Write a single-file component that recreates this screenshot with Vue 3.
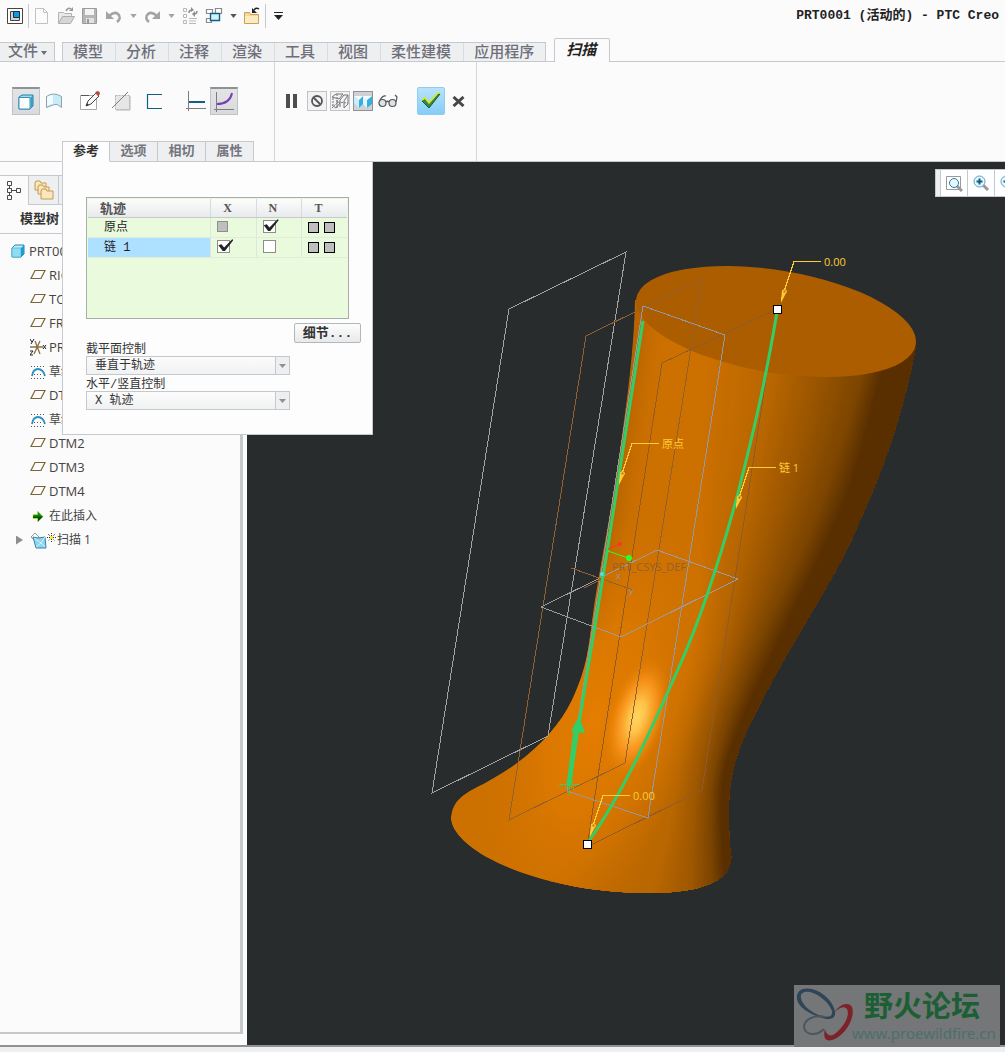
<template>
  <div class="app">
    <!-- Quick access bar -->
    <header class="titlebar">
      <div class="quick">
        <template v-for="(q, i) in QUICK" :key="i">
          <span v-if="q.sep" class="quick-sep" />
          <button v-else-if="q.drop" class="drop" :class="{ dark: q.dark }" :aria-label="q.label">
            <svg width="7" height="4" viewBox="0 0 8 5"><path d="M0 0h8L4 5z" /></svg>
          </button>
          <button v-else class="quick-btn" :aria-label="q.label">
            <svg width="20" height="20" viewBox="0 0 20 20" fill="none" v-html="q.art" />
          </button>
        </template>
      </div>
      <h1 class="title">PRT0001 (活动的) - PTC Creo</h1>
    </header>

    <!-- Ribbon tabs -->
    <nav class="tabs">
      <button class="file-tab">
        文件<svg width="6" height="4" viewBox="0 0 6 4"><path d="M0 0h6L3 4z" fill="#6d6e78" /></svg>
      </button>
      <div class="tab-strip">
        <button v-for="t in TABS" :key="t" class="tab">{{ t }}</button>
      </div>
      <button class="tab-active">扫描</button>
    </nav>

    <!-- Ribbon -->
    <section class="ribbon">
      <div class="group group-tools">
        <div class="tools">
          <button
            v-for="t in TOOLS"
            :key="t.label"
            class="tool"
            :class="[t.cls, { pressed: t.on }]"
            :aria-label="t.label"
          >
            <svg width="22" height="22" viewBox="0 0 22 22" fill="none" v-html="t.art" />
          </button>
        </div>
        <div class="subtabs">
          <button
            v-for="s in SUBTABS"
            :key="s"
            class="subtab"
            :class="{ on: s === subtab }"
            @click="subtab = s"
          >{{ s }}</button>
        </div>
      </div>

      <div class="group group-run">
        <div class="tools run">
          <button class="mini plain" aria-label="暂停">
            <svg width="12" height="14" viewBox="0 0 12 14"><path d="M0 0h4v14H0zM7 0h4v14H7z" fill="#4d4d4d" /></svg>
          </button>
          <button class="mini boxed" aria-label="无预览">
            <svg width="14" height="14" viewBox="0 0 14 14" fill="none" stroke="#555" stroke-width="1.8"><circle cx="7" cy="7" r="5" /><path d="M3.5 3.5l7 7" /></svg>
          </button>
          <button class="mini boxed" aria-label="分离">
            <svg width="18" height="18" viewBox="0 0 18 18" fill="none" stroke="#777"><path d="M1 5l4-3h7l-4 5zM1 13l4 3 4-5M6 8v8M9 15V8l4-5h4l-4 6v7l4-4V3" /><path d="M2 6v7M6 2v8l11 1M1 16l6-6" stroke-dasharray="2 1" /></svg>
          </button>
          <button class="mini boxed sunk" aria-label="连接">
            <svg width="18" height="18" viewBox="0 0 18 18"><path d="M0 4l5 4v8l-5-5z" fill="#c9eefb" /><path d="M5 8l4-4v8l-4 4z" fill="#38aede" /><path d="M9 4l4 4v8l-4-4z" fill="#e2f6fd" /><path d="M13 8l5-4v8l-5 4z" fill="#38aede" /><path d="M0 4h5l4 0-4 4zM9 4h9l-5 4z" fill="#f4fbfd" /></svg>
          </button>
          <button class="mini plain" aria-label="预览">
            <svg width="20" height="14" viewBox="0 0 20 14" fill="#dce3e8" stroke="#555" stroke-width="1.2"><circle cx="4.5" cy="9" r="3.5" /><circle cx="14.5" cy="9" r="3.5" /><path d="M8 8q1.5-1.500 3 0M2 6q3-5 6-4M18 8l1-5-2-2" fill="none" /></svg>
          </button>
          <button class="tool accept" aria-label="确定">
            <svg width="22" height="18" viewBox="0 0 22 18"><path d="M2 9l3-2 4 5L18 2l2 0L9 16z" fill="#2f8a4c" stroke="#1f5a30" /><path d="M2 8l3-2 4 5L18 1h2" fill="none" stroke="#d9ea1a" stroke-width="1.6" /></svg>
          </button>
          <button class="mini plain" aria-label="取消">
            <svg width="13" height="11" viewBox="0 0 13 11" fill="none" stroke="#474747" stroke-width="3"><path d="M1.500 1l10 9M11.500 1l-10 9" /></svg>
          </button>
        </div>
      </div>
    </section>

    <main class="work">
      <!-- Model tree -->
      <aside class="side">
        <div class="side-box">
          <div class="side-tabs">
            <button class="side-tab on" aria-label="模型树">
              <svg width="14" height="20" viewBox="0 0 14 20" fill="none" stroke="#4a4a4a"><path d="M.5 .5h4v4h-4zM.5 7.500h4v4h-4zM.5 14.500h4v4h-4zM9.500 7.500h4v4h-4zM2.500 4v3M2.500 11v3M5 9.500h4" /></svg>
            </button>
            <button class="side-tab" aria-label="文件夹浏览器">
              <svg width="20" height="20" viewBox="0 0 20 20" fill="#fbe7bb" stroke="#c29a55"><path d="M1 3l1-2h4l1 2h5v7H1z" /><path d="M4 7l1-2h4l1 2h5v7H4z" /><path d="M7 11l1-2h4l1 2h6v8H7z" /></svg>
            </button>
            <span class="side-rest" />
          </div>
          <h2 class="side-title">模型树</h2>
          <ul class="tree">
            <li v-for="(n, i) in TREE" :key="i" :class="['node', n.kind, { cjk: n.cjk }]">
              <span v-if="n.kind === 'sweep'" class="caret" />
              <svg class="node-icon" width="17" height="18" viewBox="0 0 17 18" fill="none" v-html="NODE_ART[n.kind]" />
              <svg v-if="n.kind === 'sweep'" class="star" width="9" height="9" viewBox="0 0 9 9"><path d="M4.500 0v9M0 4.500h9M1 1l7 7M8 1l-7 7" stroke="#333" stroke-dasharray="1 1" /><path d="M3 3h3v3H3z" fill="#f4ee22" /></svg>
              <span>{{ n.text }}</span>
            </li>
          </ul>
        </div>
      </aside>

      <!-- Model canvas -->
      <div class="view">
        <svg class="scene" viewBox="247 162 758 883" preserveAspectRatio="xMinYMin meet">
          <defs>
            <clipPath id="body"><path :d="BODY" /></clipPath>
            <radialGradient id="glow">
              <stop offset="0" stop-color="#e57d00" />
              <stop offset="0.45" stop-color="#de7a00" stop-opacity="0.75" />
              <stop offset="1" stop-color="#d07300" stop-opacity="0" />
            </radialGradient>
            <radialGradient id="spec">
              <stop offset="0" stop-color="#ffd65e" />
              <stop offset="0.25" stop-color="#ffc44a" />
              <stop offset="0.6" stop-color="#ff9a22" stop-opacity="0.75" />
              <stop offset="1" stop-color="#e88000" stop-opacity="0" />
            </radialGradient>
            <linearGradient id="rim" gradientUnits="userSpaceOnUse" x1="615" y1="480" x2="650" y2="485">
              <stop offset="0" stop-color="#a85a00" stop-opacity="0.6" />
              <stop offset="1" stop-color="#cc7000" stop-opacity="0" />
            </linearGradient>
          </defs>

          <g clip-path="url(#body)">
            <path :d="BODY" fill="#cc7000" />
            <path d="M630 280L570 640 610 640 690 280z" fill="url(#rim)" />
            <path v-for="(s, i) in shades" :key="i" :d="s.d" :fill="s.fill" />
            <ellipse cx="596" cy="720" rx="100" ry="220" fill="url(#glow)" transform="rotate(18 596 720)" />
            <ellipse cx="637" cy="717" rx="29" ry="62" fill="url(#spec)" transform="rotate(17 637 717)" />
          </g>
          <ellipse cx="776" cy="321.5" rx="141.600" ry="51.200" fill="#ac5d00" transform="rotate(9.400 776 321.500)" />

          <!-- Datum planes -->
          <g fill="none" shape-rendering="crispEdges">
            <path d="M509 309L626 252 548 736 432 793z" stroke="#a3a3a3" />
            <path d="M586 336L702 279 625 763 509 820z" stroke="#94602f" />
            <path d="M662 363L777 309 702 790 587 847z" stroke="#8f5a2c" />
            <path d="M643 306L725 335 648 818 567 791z" stroke="#9398a2" />
            <path d="M541 607L657 550 738 579 621 637z" stroke="#9a9ca3" />
            <path d="M571 568l62 22M584 588l18-9" stroke="#94602f" />
          </g>
          <g class="csys">
            <text x="612" y="571">PRT_CSYS_DEF</text>
            <text x="616" y="579" class="axis">x</text>
            <text x="629" y="594" class="axis">y</text>
          </g>

          <!-- Trajectories -->
          <g fill="none" stroke="#33cf66" stroke-width="3">
            <path d="M643 321L607 552 569 785" />
            <path d="M777 312C765 383 755 426 738 493C718 567 698 624 680 665C653 725 625 790 589 841" />
            <path d="M569 785l7-56" stroke-width="5" />
            <path d="M559 784.500h20M569.500 775v20M565 780l9 9M574 780l-9 9" stroke-width="1" />
          </g>
          <path d="M579 716l-8 15 14 2z" fill="#33cf66" />
          <path d="M608 549l11-5" stroke="#ff3030" />
          <circle cx="620" cy="544" r="2" fill="#ff3030" />
          <path d="M608 551l20 7" stroke="#2cff2c" />
          <circle cx="629" cy="558" r="3" fill="#2cff2c" />
          <circle cx="602" cy="574" r="2" fill="#4be3e3" />

          <!-- Callouts -->
          <g v-for="c in CALLOUTS" :key="c.x + c.text" class="callout">
            <path :d="`M${c.x + 40} ${c.y - 0.5}h-27l-13 39`" fill="none" stroke="#ffcc33" shape-rendering="crispEdges" />
            <path :d="`M${c.x} ${c.y + 41}l1-13 5 1z`" fill="#ffcc33" />
            <path :d="`M${c.x + 2} ${c.y + 28}h3v3h-3z`" fill="#b8731a" stroke="#ffcc33" />
            <text :x="c.x + 43" :y="c.y + 4">{{ c.text }}</text>
          </g>
          <rect v-for="h in HANDLES" :key="h.y" :x="h.x" :y="h.y" width="8" height="8" fill="#fff" stroke="#000" />
        </svg>

        <div class="view-bar">
          <span class="grip" />
          <button class="view-btn" aria-label="重新调整">
            <svg width="18" height="18" viewBox="0 0 18 18" fill="none"><path d="M1.500 2.500h14v13h-14z" stroke="#999" /><path d="M12 12l5 5" stroke="#999" stroke-width="3" /><circle cx="9" cy="9" r="4.500" fill="#e6f7fd" stroke="#2a7ea6" /></svg>
          </button>
          <button class="view-btn" aria-label="放大">
            <svg width="18" height="18" viewBox="0 0 18 18" fill="none"><path d="M11 11l5 5" stroke="#999" stroke-width="3" /><circle cx="7.500" cy="7.500" r="5.500" fill="#e6f7fd" stroke="#5a9fc0" /><path d="M7.500 4.500v6M4.500 7.500h6" stroke="#0f5f88" stroke-width="2" /></svg>
          </button>
          <button class="view-btn" aria-label="缩小">
            <svg width="18" height="18" viewBox="0 0 18 18" fill="none"><path d="M11 11l5 5" stroke="#999" stroke-width="3" /><circle cx="7.500" cy="7.500" r="5.500" fill="#e6f7fd" stroke="#5a9fc0" /><path d="M4.500 7.500h6" stroke="#0f5f88" stroke-width="2" /></svg>
          </button>
        </div>

        <div class="mark">
          <svg class="mark-logo" width="58" height="56" viewBox="0 0 58 56" fill="none">
            <path d="M1 12C0 3 7 0 16 2C28 5 38 16 39 25C40 32 34 33 26 31C13 27 2 20 1 12zM5 11C6 18 15 26 26 29C33 31 37 29 36 24C33 15 22 7 14 5C8 4 4 6 5 11z" fill="#2e4557" fill-rule="evenodd" />
            <path d="M38 26C43 17 53 14 56 20C60 31 48 50 36 53C29 55 27 50 29 42C31 50 36 50 41 45C49 38 54 28 51 22C48 18 42 21 38 26z" fill="#7c2228" />
            <path d="M29 30C18 27 8 33 8 40C9 48 20 50 28 42" stroke="#4a5760" stroke-width="2" />
          </svg>
          <div class="mark-text">
            <strong>野火论坛</strong>
            <span>www.proewildfire.cn</span>
          </div>
        </div>
      </div>

      <!-- References panel -->
      <section class="panel">
        <div class="grid-box">
          <table class="grid">
            <thead>
              <tr><th class="name">轨迹</th><th>X</th><th>N</th><th class="last">T</th></tr>
            </thead>
            <tbody>
              <tr v-for="r in rows" :key="r.name">
                <td class="name" :class="{ sel: r.sel }">{{ r.name }}</td>
                <td><input v-model="r.x" type="checkbox" class="box" :disabled="r.lockX" :aria-label="r.name + ' X'"></td>
                <td><input v-model="r.n" type="checkbox" class="box" :aria-label="r.name + ' N'"></td>
                <td class="last">
                  <input type="checkbox" class="box tan" disabled :aria-label="r.name + ' T1'">
                  <input type="checkbox" class="box tan" disabled :aria-label="r.name + ' T2'">
                </td>
              </tr>
            </tbody>
          </table>
        </div>
        <button class="details">细节...</button>
        <div class="field">
          <label for="plane">截平面控制</label>
          <div class="select">
            <select id="plane"><option>垂直于轨迹</option></select>
            <span class="select-arrow" />
          </div>
        </div>
        <div class="field">
          <label for="horiz">水平/竖直控制</label>
          <div class="select">
            <select id="horiz"><option>X 轨迹</option></select>
            <span class="select-arrow" />
          </div>
        </div>
      </section>
    </main>
    <footer class="status" />
  </div>
</template>

<script setup>
import { ref } from 'vue'

const TABS = ['模型', '分析', '注释', '渲染', '工具', '视图', '柔性建模', '应用程序']
const SUBTABS = ['参考', '选项', '相切', '属性']
const subtab = ref('参考')

const rows = ref([
  { name: '原点', x: false, n: true, lockX: true, sel: false },
  { name: '链 1', x: true, n: false, lockX: false, sel: true },
])

const QUICK = [
  { label: '窗口', art: '<path d="M2.500 2.500h15v15h-15z" fill="#fff" stroke="#444"/><path d="M5.500 5.500h9v9h-9z" fill="#d8d4cc" stroke="#444"/><path d="M8.500 5.500h6v6h-6z" fill="#0a9be8" stroke="#14323f"/>' },
  { sep: true },
  { label: '新建', art: '<path d="M3.500 2.500h8l4 4v11h-12z" fill="#fcfcfc" stroke="#c2c2c2"/><path d="M11.500 2.500v4h4" stroke="#c2c2c2"/>' },
  { label: '打开', art: '<path d="M2.500 17V6.500h5l1 1h7V11" fill="#e9e9e9" stroke="#b4b4b4"/><path d="M2.500 17.500l4-7h12l-4 7z" fill="#d6d6d6" stroke="#adadad"/><path d="M10 5q2-4 5-2" stroke="#999" stroke-width="1.500"/><path d="M13 5h4V1z" fill="#999"/>' },
  { label: '保存', art: '<path d="M2.500 2.500h14v15h-14z" fill="#b5b5b5" stroke="#9c9c9c"/><path d="M5 3h9v6H5z" fill="#f4f4f4"/><path d="M6 12h8v5H6z" fill="#e2e2e2"/><path d="M7 13h2v4H7z" fill="#999"/>' },
  { label: '撤消', art: '<path d="M5 10q5-5 9-2q4 4-1 8" stroke="#a3a3a3" stroke-width="2.500"/><path d="M2 5v8h8z" fill="#a3a3a3"/>' },
  { drop: true, label: '撤消列表' },
  { label: '重做', art: '<path d="M15 10q-5-5-9-2q-4 4 1 8" stroke="#a3a3a3" stroke-width="2.500"/><path d="M18 5v8h-8z" fill="#a3a3a3"/>' },
  { drop: true, label: '重做列表' },
  { label: '重新生成', art: '<path d="M3.500 2.500h3v3h-3zM3.500 8.500h3v3h-3zM3.500 14.500h3v3h-3zM9 12.500h8M9 15h7M9 17.500h7" stroke="#b8b8b8"/><path d="M9 7q0-3 3-3M17 5q0 3-3 3" stroke="#8d8d8d" stroke-width="1.500"/><path d="M11 1v5l3-2zM15 5v6l-3-3z" fill="#8d8d8d"/>' },
  { label: '窗口切换', art: '<path d="M2.500 3.500h6v4h-6zM11.500 2.500h6v5h-6zM2.500 12.500h5v4h-5z" fill="#fff" stroke="#8a8a8a" stroke-width="1.200"/><path d="M6.500 7.500h9v7h-9z" fill="#d7f1fb" stroke="#0f5f88" stroke-width="1.400"/>' },
  { drop: true, dark: true, label: '窗口列表' },
  { label: '关闭', art: '<path d="M2.500 17.500V6.500h5l1 2h8v9z" fill="#f7d794" stroke="#c7a05a"/><path d="M3 10h13v7H3z" fill="#fdebc0"/><path d="M17 3q-3-2-5 1" stroke="#222" stroke-width="1.500"/><path d="M10 2v5h5z" fill="#222"/>' },
  { sep: true },
  { label: '自定义', art: '<path d="M5 6.500h9" stroke="#222"/><path d="M5 9h9l-4.500 5z" fill="#222"/>' },
]

const TOOLS = [
  { label: '实体', on: true, art: '<path d="M4 6l3-2h11v11l-3 3H4z" fill="#9fdcf3" stroke="#1c7fa8"/><path d="M4 6.500h11V18H4z" fill="#fdfdfd" stroke="#3b93b8"/><path d="M15.500 6.500L18 4.500V15l-2.500 2.500z" fill="#3b9cc4"/>' },
  { label: '曲面', art: '<path d="M3.500 6.500q7-5 15 0v11q-4-4-7-3t-8 3z" fill="#c6ecf9" stroke="#8ba0ab"/><path d="M4 7q3-2 6-2v9q-4 0-6 2z" fill="#f1fbfe"/>' },
  { label: '草绘', cls: 'gap-m', art: '<path d="M1.500 5.500h16v14h-16z" fill="#fff" stroke="#aaa"/><path d="M2 5.500h8" stroke="#555"/><path d="M7 16l2-5L17 3l3 3-8 8z" fill="#f7f7f7" stroke="#444"/><path d="M16 3l2-2q3 0 3 3l-2 2z" fill="#b84a42"/><path d="M7 16l1-3 2 2z" fill="#333"/>' },
  { label: '移除材料', cls: 'gap-s', art: '<path d="M4.500 5.500h14v14h-14z" fill="#e6e6e6" stroke="#b5b5b5" stroke-dasharray="2 1"/><path d="M19 6v14H5" stroke="#b5b5b5"/><path d="M1 18L17 2" stroke="#7c7c7c"/>' },
  { label: '薄板', cls: 'gap-s', art: '<path d="M19 4.500H4.500v14H19" stroke="#0f5f88" stroke-width="1.200"/>' },
  { label: '恒定截面', cls: 'gap-l', art: '<path d="M3.500 1v20M1 18.500h20" stroke="#7d7d7d"/><path d="M4 12h16" stroke="#0f5f88" stroke-width="2"/>' },
  { label: '可变截面', on: true, art: '<path d="M3.500 1v20M1 18.500h20" stroke="#7d7d7d"/><path d="M4 13Q17 13 19 2" stroke="#7a3fb0" stroke-width="2"/>' },
]

const TREE = [
  { kind: 'part', text: 'PRT0001.PRT' },
  { kind: 'plane', text: 'RIGHT' },
  { kind: 'plane', text: 'TOP' },
  { kind: 'plane', text: 'FRONT' },
  { kind: 'axes', text: 'PRT_CSYS_DEF' },
  { kind: 'sketch', text: '草绘 1', cjk: true },
  { kind: 'plane', text: 'DTM1' },
  { kind: 'sketch', text: '草绘 2', cjk: true },
  { kind: 'plane', text: 'DTM2' },
  { kind: 'plane', text: 'DTM3' },
  { kind: 'plane', text: 'DTM4' },
  { kind: 'insert', text: '在此插入', cjk: true },
  { kind: 'sweep', text: '扫描 1', cjk: true },
]

const NODE_ART = {
  part: '<path d="M2 6l3-3h9v9l-3 3H2z" fill="#c3effb" stroke="#2784ad"/><path d="M2 6h9v9H2z" fill="#8fdcf7" stroke="#5fb8da"/><path d="M11 6l3-3v9l-3 3z" fill="#1f9cd0"/>',
  plane: '<path d="M5 4.500h10l-4 8H1z" stroke="#7c6434" stroke-width="1.200"/>',
  axes: '<path d="M0 9h13M5 3l5 13M10 3L4 16" stroke="#8a7040" stroke-width="1.300"/><path d="M0 1l2 3M4 1L1 6M0 13h3l-3 4h3M13 7l3 4M16 7l-3 4" stroke="#222"/>',
  sketch: '<path d="M1 3.500h14M1 15.500h14M4 11.500h8" stroke="#555" stroke-dasharray="1 2"/><path d="M2 13Q3 6 8 6T15 13" stroke="#2a8ec0" stroke-width="1.800"/>',
  insert: '<path d="M3 7.500h4.500V4l5.500 5.500L7.500 15v-3.500H3z" fill="#0d8c12" stroke="#c9e640" stroke-width=".6"/><path d="M3 9.500h10l-5 5v-3.500H3z" fill="#094d0c"/>',
  sweep: '<path d="M1 6l4-4 4 4-4 4z" fill="#fdfdfd" stroke="#999"/><path d="M3 6l5 1 7-1 1 11H6z" fill="#8fd3ec" stroke="#2f86ab"/><path d="M4 7l7 5 4-6M6 16l5-4 4 4" stroke="#d5f0f9"/>',
}

const CALLOUTS = [
  { x: 781, y: 262, text: '0.00' },
  { x: 619, y: 444, text: '原点' },
  { x: 736, y: 468, text: '链 1' },
  { x: 590, y: 796, text: '0.00' },
]
const HANDLES = [{ x: 773.5, y: 305.5 }, { x: 583.5, y: 840.5 }]

// Silhouette of the swept body
const BODY = 'M635 300C634 350 627 400 620 450C612 505 605 540 595 600C588 650 588 665 572 700'
  + 'C556 733 525 762 483 784C462 794 451 802 451 820C455 850 530 890 641 893'
  + 'C700 894 733 882 731 855C729 842 729 835 729 820C728 790 731 765 747 730'
  + 'C760 703 770 683 807 620C836 572 850 545 860 520C888 460 906 400 916 345L776 290z'

// Columns of x per height, one line for each key tone
const ROWS_Y = [320, 400, 480, 560, 640, 720, 780, 840, 900]
const TONES = [
  { rgb: [204, 112, 0], x: [706, 702, 700, 700, 694, 672, 645, 590, 520] },
  { rgb: [184, 102, 0], x: [778, 767, 750, 733, 717, 692, 677, 667, 650] },
  { rgb: [158, 87, 0],  x: [820, 806, 787, 762, 737, 710, 697, 692, 690] },
  { rgb: [122, 68, 0],  x: [876, 856, 830, 798, 760, 728, 713, 711, 713] },
  { rgb: [90, 47, 0],   x: [895, 874, 852, 818, 779, 742, 723, 722, 727] },
]

function curve(xs) {
  let d = `M${xs[0]} ${ROWS_Y[0]}`
  for (let i = 0; i < xs.length - 1; i++) {
    const at = k => Math.min(Math.max(k, 0), xs.length - 1)
    const [a, b, c, e] = [at(i - 1), i, i + 1, at(i + 2)]
    d += `C${xs[b] + (xs[c] - xs[a]) / 6} ${ROWS_Y[b] + (ROWS_Y[c] - ROWS_Y[a]) / 6}`
      + ` ${xs[c] - (xs[e] - xs[b]) / 6} ${ROWS_Y[c] - (ROWS_Y[e] - ROWS_Y[b]) / 6} ${xs[c]} ${ROWS_Y[c]}`
  }
  return d + 'L960 900L960 320z'
}

const STEPS = 14
const shades = []
for (let t = 0; t < TONES.length - 1; t++) {
  for (let s = 1; s <= STEPS; s++) {
    const k = s / STEPS
    const mix = (a, b) => a + (b - a) * k
    shades.push({
      d: curve(TONES[t].x.map((x, i) => mix(x, TONES[t + 1].x[i]))),
      fill: `rgb(${TONES[t].rgb.map((v, i) => Math.round(mix(v, TONES[t + 1].rgb[i]))).join(',')})`,
    })
  }
}
</script>

<style>
body { margin: 0; background: #fbfbfb; }
</style>

<style scoped>
.app {
  min-height: 100vh;
  display: flex;
  flex-direction: column;
  overflow: hidden;
  background: #fbfbfb;
  color: #333;
  font-family: "Liberation Mono", "Noto Sans CJK SC", monospace;
  font-size: 12px;
}
.app *, .app *::after { box-sizing: border-box; }
button, select {
  font: inherit;
  color: inherit;
  border: 0;
  margin: 0;
  padding: 0;
  border-radius: 0;
  background: none;
}
svg { display: block; flex-shrink: 0; }

/* Title */
.titlebar {
  display: flex;
  justify-content: space-between;
  height: 38px;
}
.quick { display: flex; align-items: center; height: 32px; padding-left: 3px; }
.quick-btn { width: 24px; height: 24px; display: grid; place-items: center; }
.quick-sep { width: 1px; height: 24px; margin: 0 1px; background: #c5c9cd; }
.drop { width: 14px; height: 24px; display: grid; place-items: center; fill: #a3a3a3; }
.drop.dark { fill: #555; }
.title {
  margin: 0;
  padding: 6px 6px 0 0;
  font-size: 13px;
  line-height: 20px;
  color: #222;
  white-space: pre;
}

/* Tabs */
.tabs {
  display: flex;
  align-items: flex-end;
  height: 24px;
  border-bottom: 1px solid #c5c9cd;
  font-size: 15px;
  font-weight: 500;
  color: #6d6e78;
  line-height: 20px;
}
.file-tab {
  display: flex;
  align-items: center;
  gap: 3px;
  height: 19px;
  padding: 2px 7px 0 8px;
  border: 1px solid #c5c9cd;
  border-width: 1px 1px 0 0;
  background: #eeeff1;
}
.tab-strip {
  display: flex;
  height: 19px;
  margin: 0 8px 0 7px;
  border: 1px solid #c5c9cd;
  border-bottom: 0;
  background: #eeeff1;
}
.tab { padding: 1px 12px 0 10px; border-right: 1px solid #d9dcdf; }
.tab:last-child { padding-right: 11px; border-right: 0; }
.tab-active {
  height: 24px;
  padding: 3px 13px 0 11px;
  margin-bottom: -1px;
  border: 1px solid #c5c9cd;
  border-bottom: 0;
  border-radius: 2px 2px 0 0;
  background: #fbfbfb;
  color: #222;
  font-weight: 700;
  font-style: italic;
}

/* Ribbon */
.ribbon { display: flex; height: 100px; border-bottom: 1px solid #c5c9cd; }
.group {
  display: flex;
  flex-direction: column;
  justify-content: space-between;
  border-right: 1px solid #d5d8db;
}
.group-tools { width: 275px; }
.group-run { width: 202px; }
.tools { display: flex; align-items: center; padding: 25px 0 0 12px; }
.tool {
  width: 28px;
  height: 28px;
  display: grid;
  place-items: center;
  border: 1px solid transparent;
}
.tool.pressed {
  border-color: #c0c2c5;
  border-top: 2px solid #8f9194;
  background: linear-gradient(#e3e4e6, #d9dadd);
}
.gap-s { margin-left: 4px; }
.gap-m { margin-left: 8px; }
.gap-l { margin-left: 14px; }
.run { padding-left: 7px; gap: 3px; }
.mini { width: 20px; height: 20px; display: grid; place-items: center; }
.mini.plain:first-child { margin-right: 2px; }
.boxed { border: 1px solid #c0c2c5; background: #f3f3f5; }
.sunk { border-color: #8f9194; background: #cfd1d4; }
.sunk + .plain { margin-left: 2px; }
.accept {
  margin: 0 0 0 16px;
  border: 1px solid #8dcdf0;
  border-radius: 2px;
  background: linear-gradient(#b9e2fa, #84cdf9);
}

.subtabs { display: flex; margin: 0 0 -1px 62px; }
.subtab {
  width: 48px;
  height: 21px;
  border: 1px solid #c5c9cd;
  border-left-width: 0;
  background: #eeeff1;
  color: #74757d;
  font-size: 13px;
  font-weight: 700;
  line-height: 18px;
}
.subtab.on {
  border-left-width: 1px;
  border-bottom-color: #fdfdfd;
  background: #fdfdfd;
  color: #333;
}

/* Workspace */
.work { position: relative; display: flex; flex: 1; }
.side { width: 247px; flex-shrink: 0; padding-bottom: 11px; }
.side-box {
  width: 243px;
  height: 100%;
  padding-top: 13px;
  border-right: 3px solid #c5c9cd;
  border-bottom: 2px solid #c5c9cd;
}
.side-tabs { display: flex; height: 30px; }
.side-tab {
  width: 31px;
  display: grid;
  place-items: center;
  border: 1px solid #c5c9cd;
  background: #eeeff1;
}
.side-tab.on { width: 28px; border-width: 1px 0 0; background: none; }
.side-rest { flex: 1; border-top: 1px solid #c5c9cd; border-bottom: 1px solid #c5c9cd; background: #eeeff1; }
.side-title {
  margin: 0;
  padding: 5px 0 3px 20px;
  border-bottom: 1px solid #c5c9cd;
  font-size: 13px;
  line-height: 20px;
}
.tree {
  margin: 0;
  padding: 6px 0 0;
  list-style: none;
  font-family: "Open Sans", "Noto Sans CJK SC", sans-serif;
  font-size: 13px;
  line-height: 22px;
  color: #444;
}
.node { display: flex; align-items: center; height: 24px; padding: 0 0 2px 30px; white-space: nowrap; }
.node.part { padding-left: 10px; }
.node.cjk { padding-bottom: 0; font-size: 12px; line-height: 24px; }
.node.sweep { padding-left: 16px; }
.node-icon { margin-right: 2px; }
.star { margin: 0 1px 6px -2px; }
.caret {
  width: 7px;
  height: 9px;
  margin-right: 7px;
  background: #8d8d8d;
  clip-path: polygon(0 0, 100% 50%, 0 100%);
}

.view { position: relative; flex: 1; min-width: 0; background: #282c2d; }
.scene { width: 100%; height: auto; }
.csys, .callout { font-family: "Open Sans", "Noto Sans CJK SC", sans-serif; font-size: 11px; }
.csys { fill: #94602f; }
.csys .axis { fill: #9398a2; font-size: 9px; }
.callout text { fill: #ffcc33; }

.view-bar {
  position: absolute;
  top: 7px;
  right: 0;
  width: 70px;
  height: 28px;
  display: flex;
  overflow: hidden;
  border: 1px solid #c5c9cd;
  border-right: 0;
  background: #fff;
}
.grip { width: 5px; flex-shrink: 0; border-right: 1px solid #c5c9cd; background: #eeeff1; }
.view-btn {
  width: 27px;
  flex-shrink: 0;
  display: grid;
  place-items: center;
  border-right: 1px solid #c5c9cd;
}

.mark {
  position: absolute;
  right: 5px;
  bottom: -2px;
  width: 206px;
  height: 62px;
  display: flex;
  align-items: flex-start;
  padding: 2px 0 0 2px;
  background: #747678;
}
.mark-text { display: flex; flex-direction: column; margin-left: -2px; }
.mark-text strong {
  margin-left: 12px;
  font-family: "Noto Sans CJK SC", sans-serif;
  font-size: 29px;
  line-height: 34px;
  color: #1d5f35;
}
.mark-text span {
  font-family: "Noto Sans", sans-serif;
  font-size: 15px;
  line-height: 24px;
  color: #4b706a;
}

/* References panel */
.panel {
  position: absolute;
  top: 0;
  left: 62px;
  width: 311px;
  height: 273px;
  padding: 35px 11px 0 23px;
  border: 1px solid #c5c9cd;
  border-top: 0;
  background: #fdfdfd;
}
.grid-box {
  width: 263px;
  height: 122px;
  padding: 1px;
  border: 1px solid #a9acaf;
  background: #eafbdd;
}
.grid { width: 100%; table-layout: fixed; border-collapse: collapse; }
.grid th {
  height: 18px;
  padding: 2px 12px 0 0;
  border-right: 1px solid #d9dcdf;
  border-bottom: 1px solid #c5c9cd;
  background: linear-gradient(#fcfcfc, #e9eaec);
  font-family: "Liberation Serif", "Noto Sans CJK SC", serif;
  font-size: 12px;
  line-height: 15px;
  color: #555;
}
.grid th, .grid td { width: 45px; }
.grid td {
  height: 20px;
  padding: 0 0 0 6px;
  border-right: 1px solid #dfe6df;
  border-bottom: 1px solid #e2ecd9;
  line-height: 18px;
  color: #222;
}
.grid .name { width: 122px; padding-left: 16px; }
.grid td.name { padding-top: 1px; }
.grid th.name { padding-left: 12px; text-align: left; font-size: 13px; }
.grid .last { border-right: 0; }
.grid td.sel { background: #aee0ff; }
.box {
  appearance: none;
  position: relative;
  width: 13px;
  height: 13px;
  margin: 0;
  vertical-align: middle;
  border: 1px solid #8d8d8d;
  background: #fff;
}
.box:disabled { width: 11px; height: 11px; background: #bfbfbf; }
.box.tan { width: 11px; height: 11px; margin-right: 5px; border-color: #000; }
.box.tan + .box.tan { margin-right: 0; }
.grid td.last { padding-left: 6px; font-size: 0; white-space: nowrap; }
.box:checked::after {
  content: "";
  position: absolute;
  left: 0;
  top: -2px;
  width: 15px;
  height: 12px;
  background: #222;
  clip-path: polygon(0 50%, 20% 42%, 38% 68%, 92% 0, 100% 6%, 42% 100%, 30% 100%);
}

.details {
  display: block;
  width: 67px;
  height: 20px;
  margin: 4px 0 0 auto;
  border: 1px solid #b4b7ba;
  border-radius: 2px;
  background: linear-gradient(#fdfdfd, #e8e9eb);
  font-size: 13px;
  font-weight: 700;
  line-height: 19px;
}
.field { width: 204px; margin-bottom: 2px; color: #333; }
.field label { display: block; height: 13px; line-height: 15px; }
.select { position: relative; height: 19px; }
.field + .field { padding-top: 1px; }
.select select {
  appearance: none;
  width: 100%;
  height: 19px;
  padding: 1px 20px 0 8px;
  border: 1px solid #c5c9cd;
  background: linear-gradient(#fcfcfc, #f0f1f2);
  line-height: 16px;
}
.select-arrow {
  position: absolute;
  top: 0;
  right: 0;
  width: 15px;
  height: 19px;
  border: 1px solid #c5c9cd;
  background: #eeeff1;
  pointer-events: none;
}
.select-arrow::after {
  content: "";
  position: absolute;
  top: 7px;
  left: 3px;
  width: 7px;
  height: 4px;
  background: #8d9196;
  clip-path: polygon(0 0, 100% 0, 50% 100%);
}

.status { height: 7px; border-top: 2px solid #929292; background: #eeeff0; }
</style>
